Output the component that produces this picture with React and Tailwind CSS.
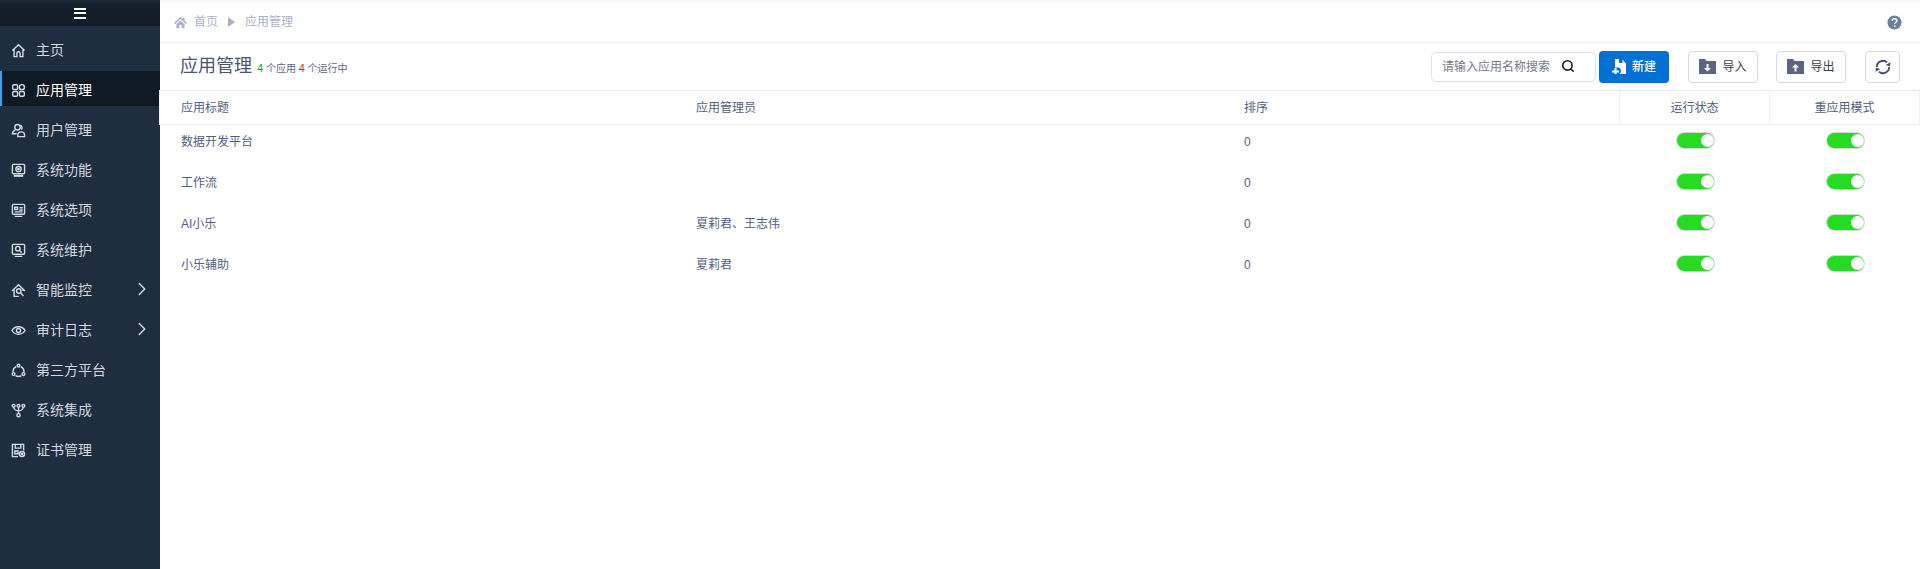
import { ChevronRight, Search } from 'lucide-react';

const stroke = { fill: 'none', stroke: 'currentColor', strokeWidth: 1.5 };

const icons = {
  home: <path {...stroke} d="M1.500 8 8 1.800 14.500 8M3.300 6.800V14.500h3v-3.500a1.700 1.700 0 0 1 3.400 0v3.500h3V6.800" />,
  apps: (
    <g {...stroke}>
      <rect x="1.800" y="1.800" width="5.200" height="5.200" rx="1.300" />
      <circle cx="11.600" cy="4.400" r="2.700" />
      <rect x="1.800" y="9" width="5.200" height="5.200" rx="1.300" />
      <rect x="9" y="9" width="5.200" height="5.200" rx="1.300" />
    </g>
  ),
  user: (
    <g {...stroke}>
      <circle cx="7" cy="4.500" r="2.900" />
      <path d="M9.800 2.200a2.800 2.800 0 0 1 1 4.800M4.500 7.500C2.800 8.200 1.500 9.300 1.500 11.500h4.500M7.300 14.500v-1.300c0-2.300 1.500-3.700 3.500-3.700s3.700 1.400 3.700 3.700v1.300z" />
    </g>
  ),
  func: (
    <g {...stroke}>
      <rect x="1.500" y="1.500" width="13" height="10" rx="1" />
      <circle cx="8" cy="6.500" r="2.800" />
      <circle cx="8" cy="6.500" r=".8" />
      <path d="M3 13.800h10" strokeWidth="2" />
    </g>
  ),
  option: (
    <g {...stroke}>
      <rect x="1.500" y="1.500" width="13" height="10.500" rx="1" />
      <path d="M4 4.500h3v2.500H4zM9 5h3.500M9 7.500h3.500M4 9.500h8.500M4 14.300h8" />
    </g>
  ),
  repair: (
    <g {...stroke}>
      <rect x="1.500" y="1.500" width="13" height="10.500" rx="1" />
      <circle cx="7.300" cy="6" r="2.400" />
      <path d="m9 7.800 2.200 2.400M4 14.300h8" />
    </g>
  ),
  monitor: (
    <g {...stroke}>
      <path d="M1 8.500 8 1.800l7 6.700M3.300 7v7.300h5M12.800 7v1.500" />
      <circle cx="8.300" cy="8.500" r="2.400" />
      <path d="m10 10.200 3.300 3.800" />
    </g>
  ),
  eye: (
    <g {...stroke}>
      <path d="M1 8c1.600-2.700 4-4 7-4s5.400 1.300 7 4c-1.600 2.700-4 4-7 4s-5.400-1.300-7-4z" />
      <circle cx="8" cy="8" r="2.200" />
    </g>
  ),
  third: (
    <g {...stroke}>
      <circle cx="8" cy="2.800" r="1.500" />
      <circle cx="2.700" cy="11.800" r="1.500" />
      <circle cx="13.300" cy="11.800" r="1.500" />
      <path d="M5.500 3.800a6.200 6.200 0 0 0-3.400 5.700M10.500 3.800a6.200 6.200 0 0 1 3.400 5.700M4.800 13.500a6.200 6.200 0 0 0 6.400 0" />
    </g>
  ),
  integrate: (
    <g {...stroke}>
      <circle cx="2.800" cy="3" r="1.500" />
      <circle cx="8" cy="3" r="1.500" />
      <circle cx="13.200" cy="3" r="1.500" />
      <circle cx="8" cy="13" r="1.700" />
      <path d="M3 4.500c.3 2.500 2 3.700 5 3.700s4.700-1.200 5-3.700M8 4.500v6.800" />
    </g>
  ),
  cert: (
    <g {...stroke}>
      <path d="M7.500 14.500h-6v-13h12v6.500" />
      <path d="M4.500 1.500v4h6v-4M4 8.500h3.500v3H4z" />
      <circle cx="11.700" cy="11.800" r="2.700" />
      <circle cx="11.700" cy="11.800" r=".7" />
    </g>
  ),
};

const menu = [
  { key: 'home', label: '主页' },
  { key: 'apps', label: '应用管理', active: true },
  { key: 'user', label: '用户管理' },
  { key: 'func', label: '系统功能' },
  { key: 'option', label: '系统选项' },
  { key: 'repair', label: '系统维护' },
  { key: 'monitor', label: '智能监控', arrow: true },
  { key: 'eye', label: '审计日志', arrow: true },
  { key: 'third', label: '第三方平台' },
  { key: 'integrate', label: '系统集成' },
  { key: 'cert', label: '证书管理' },
];

const rows = [
  { title: '数据开发平台', admin: '' },
  { title: '工作流', admin: '' },
  { title: 'AI小乐', admin: '夏莉君、王志伟' },
  { title: '小乐辅助', admin: '夏莉君' },
];

function Toggle() {
  return (
    <div className="mx-auto mb-[3px] flex h-[15px] w-[37px] items-center justify-end rounded-full bg-[#26dc22] shadow-[0_0_0_1px_#d4d8d4]">
      <div className="h-[13px] w-[13px] rounded-full bg-white" />
    </div>
  );
}

function Sidebar() {
  return (
    <aside className="flex w-[160px] shrink-0 flex-col bg-[#1e2d3f] text-[#d3d8de]">
      <div className="flex h-[26px] items-center justify-center bg-gradient-to-b from-[#1e2a38] to-[#131e2a] to-[6px]">
        <div className="flex h-[11px] w-[12px] flex-col justify-between">
          <span className="h-[2px] bg-white" />
          <span className="h-[2px] bg-white" />
          <span className="h-[2px] bg-white" />
        </div>
      </div>
      <nav className="flex flex-col pt-[4px]">
        {menu.map((item) => (
          <div
            key={item.key}
            className={
              item.active
                ? 'mb-[4px] mt-[1px] flex h-[35px] items-center border-l-2 border-[#409eee] bg-[#0f1a24] pl-[9px] pt-[3px] text-[14px] text-white'
                : 'flex h-[40px] items-center border-l-2 border-transparent pl-[9px] text-[14px]'
            }
          >
            <svg width="15" height="15" viewBox="0 0 16 16" className="shrink-0 text-[#d3dce6]">
              {icons[item.key]}
            </svg>
            <span className="ml-[10px] flex-1">{item.label}</span>
            {item.arrow && <ChevronRight size={22} strokeWidth={1.600} className="mr-[7px] -mt-[2px]" />}
          </div>
        ))}
      </nav>
    </aside>
  );
}

function Toolbar() {
  return (
    <div className="flex h-[47px] items-center pl-[20px] pr-[20px]">
      <h1 className="text-[18px] font-normal text-[#4a5470]">应用管理</h1>
      <span className="ml-[5px] mt-[3px] text-[10px] text-[#5b6680]">
        <span className="text-[11px] text-[#1f9d1f]">4</span> 个应用 <span className="text-[11px] text-[#f01818]">4</span> 个运行中
      </span>
      <div className="ml-auto flex items-center">
        <div className="flex h-[30px] w-[165px] items-center justify-between rounded-[5px] border border-[#dcdfe6] pl-[10px] pr-[20px] text-[12px] text-[#757a85]">
          <span>请输入应用名称搜索</span>
          <Search size={14} strokeWidth={2.800} className="-mt-[2px] text-[#1a2233]" />
        </div>
        <button className="ml-[3px] flex h-[32px] w-[70px] items-center justify-center rounded-[4px] bg-[#0070d2] text-[12px] font-medium text-white">
          <svg width="14" height="15" viewBox="0 0 14 15" className="mr-[6px]" fill="currentColor">
            <path d="M3 0h4v4h3.500V0.800L14 4.500V15H7.500a4 4 0 0 0-.5-6.500H3z" />
            <path d="M2.500 9h2v2.500H7v2H4.500V15h-2v-1.500H0v-2h2.500z" />
          </svg>
          新建
        </button>
        <button className="ml-[19px] flex h-[32px] w-[70px] items-center justify-center rounded-[4px] border border-[#d5d9e4] text-[12px] text-[#3a4256]">
          <svg width="17" height="15" viewBox="0 0 17 15" className="mr-[6px] text-[#5b6485]" fill="currentColor">
            <path d="M0 0h6l1.500 2H17v13H0z" />
            <path d="M7.500 5h2v4H12l-3.500 3.500L5 9h2.500z" fill="#fff" />
          </svg>
          导入
        </button>
        <button className="ml-[18px] flex h-[32px] w-[70px] items-center justify-center rounded-[4px] border border-[#d5d9e4] text-[12px] text-[#3a4256]">
          <svg width="17" height="15" viewBox="0 0 17 15" className="mr-[6px] text-[#5b6485]" fill="currentColor">
            <path d="M0 0h6l1.500 2H17v13H0z" />
            <path d="M7.500 12.500h2v-4H12L8.500 5 5 8.500h2.500z" fill="#fff" />
          </svg>
          导出
        </button>
        <button className="ml-[19px] flex h-[32px] w-[35px] items-center justify-center rounded-[4px] border border-[#d5d9e4] text-[#3f4a6b]">
          <svg width="16" height="16" viewBox="0 0 16 16">
            <path d="M1.800 8a6.200 6.200 0 0 1 10.300-4.600M14.200 8a6.200 6.200 0 0 1-10.300 4.600" fill="none" stroke="currentColor" strokeWidth="1.800" />
            <path d="M15.500 3.200 10.600 6l4.400 1.200zM.5 12.800 5.400 10 1 8.800z" fill="currentColor" />
          </svg>
        </button>
      </div>
    </div>
  );
}

function AppTable() {
  return (
    <div className="text-[12px] text-[#515e80]">
      <div className="-ml-px grid h-[35px] grid-cols-[528px_552px_379px_150px_151px] items-stretch border-y border-l border-t-[#e4e9f5] border-b-[#eff1f7] border-l-[#eff1f7]">
        <div className="flex items-center pl-[21px]">应用标题</div>
        <div className="flex items-center pl-[8px]">应用管理员</div>
        <div className="flex items-center pl-[4px]">排序</div>
        <div className="flex items-center justify-center border-l border-[#eff1f7]">运行状态</div>
        <div className="flex items-center justify-center border-x border-[#eff1f7]">重应用模式</div>
      </div>
      {rows.map((row) => (
        <div key={row.title} className="grid h-[41px] grid-cols-[528px_552px_380px_150px_150px] items-center pb-[7px]">
          <div className="pl-[21px]">{row.title}</div>
          <div className="pl-[8px]">{row.admin}</div>
          <div className="pl-[4px]">0</div>
          <div><Toggle /></div>
          <div><Toggle /></div>
        </div>
      ))}
    </div>
  );
}

export default function App() {
  return (
    <div className="flex h-[569px] w-[1920px] overflow-hidden bg-white font-['Liberation_Sans','Noto_Sans_CJK_SC',sans-serif]">
      <Sidebar />
      <main className="flex-1">
        <div className="flex h-[43px] items-center border-b border-t-2 border-b-[#f0f2f7] border-t-[#f7f7f7] pl-[14px] pr-[18px] text-[12px] text-[#a9b1c6]">
          <svg width="13" height="13" viewBox="0 0 16 16" fill="currentColor">
            <path d="M8 1 0 8.500 1.200 10 8 3.800 14.800 10 16 8.500 13 5.700V2h-2v1.800zM3 10l5-4.500 5 4.500v5H9.500v-4h-3v4H3z" />
          </svg>
          <span className="ml-[7px]">首页</span>
          <span className="ml-[10px] h-0 w-0 border-y-[5px] border-l-[7px] border-y-transparent border-l-[#a9b1c6]" />
          <span className="ml-[10px]">应用管理</span>
          <svg width="15" height="15" viewBox="0 0 16 16" className="ml-auto text-[#6d7ea3]">
            <circle cx="8" cy="8" r="7.500" fill="currentColor" />
            <path d="M5.500 6.200C5.600 4.700 6.600 4 8 4c1.500 0 2.500.8 2.500 2 0 1-.6 1.500-1.300 2-.6.400-.8.700-.8 1.400" fill="none" stroke="#fff" strokeWidth="1.600" />
            <circle cx="8.300" cy="11.800" r="1" fill="#fff" />
          </svg>
        </div>
        <Toolbar />
        <AppTable />
      </main>
    </div>
  );
}
